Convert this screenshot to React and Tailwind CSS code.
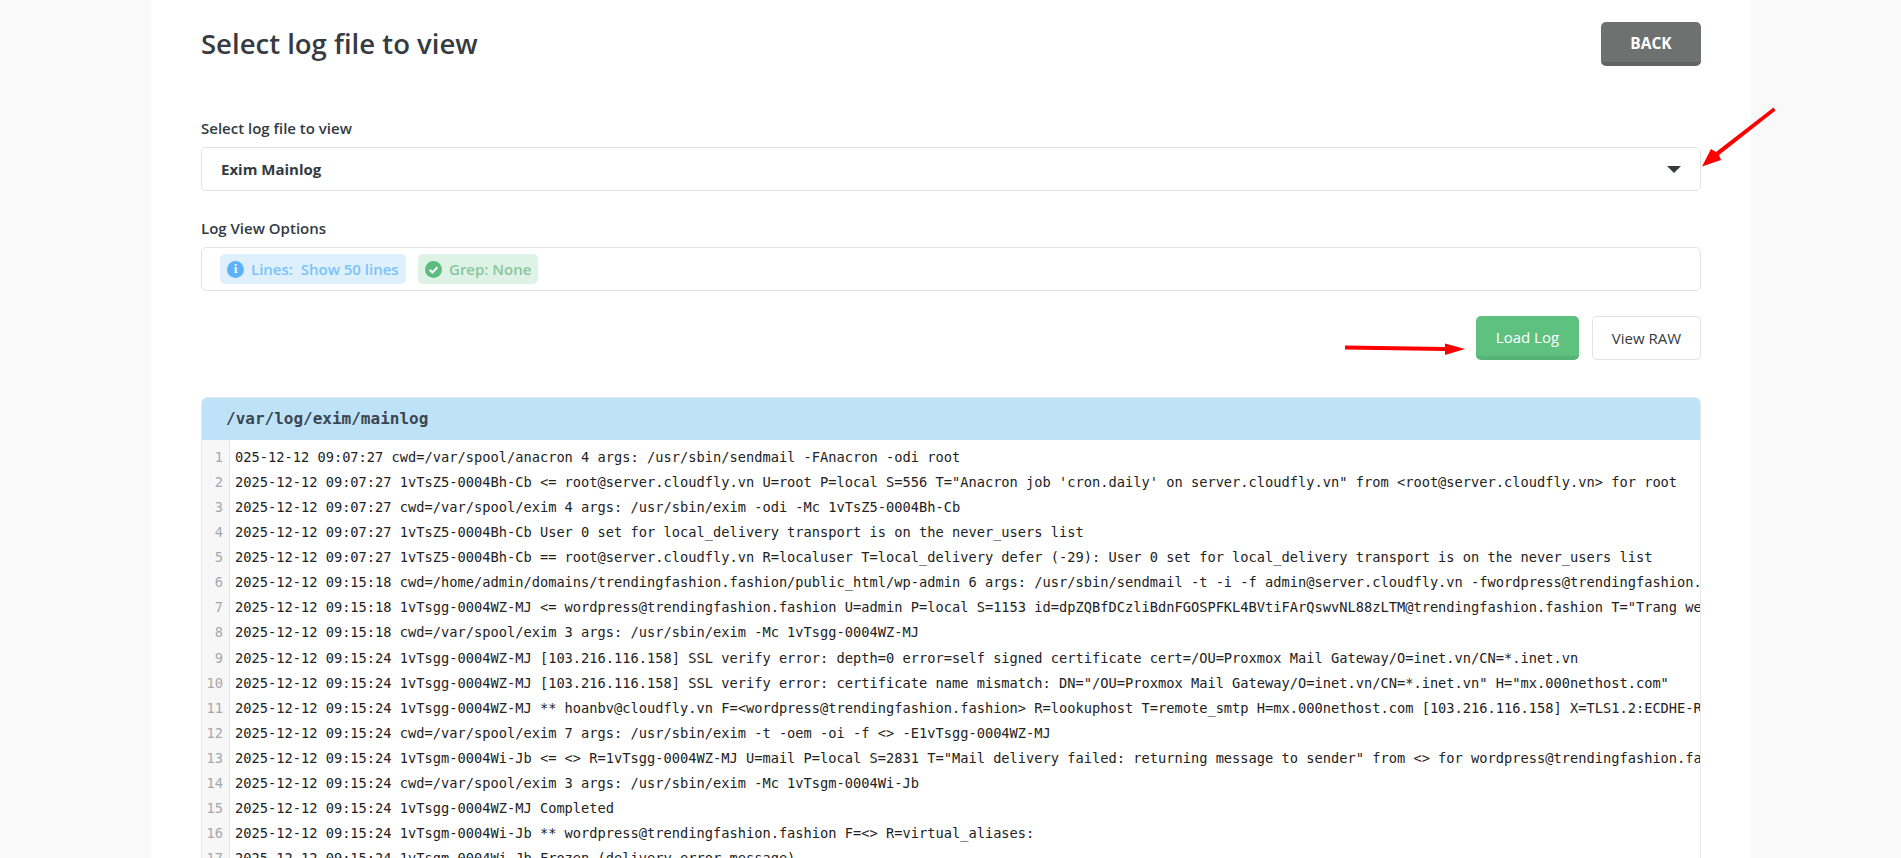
import React from 'react';

const logLines = [
    `025-12-12 09:07:27 cwd=/var/spool/anacron 4 args: /usr/sbin/sendmail -FAnacron -odi root`,
    `2025-12-12 09:07:27 1vTsZ5-0004Bh-Cb <= root@server.cloudfly.vn U=root P=local S=556 T="Anacron job 'cron.daily' on server.cloudfly.vn" from <root@server.cloudfly.vn> for root`,
    `2025-12-12 09:07:27 cwd=/var/spool/exim 4 args: /usr/sbin/exim -odi -Mc 1vTsZ5-0004Bh-Cb`,
    `2025-12-12 09:07:27 1vTsZ5-0004Bh-Cb User 0 set for local_delivery transport is on the never_users list`,
    `2025-12-12 09:07:27 1vTsZ5-0004Bh-Cb == root@server.cloudfly.vn R=localuser T=local_delivery defer (-29): User 0 set for local_delivery transport is on the never_users list`,
    `2025-12-12 09:15:18 cwd=/home/admin/domains/trendingfashion.fashion/public_html/wp-admin 6 args: /usr/sbin/sendmail -t -i -f admin@server.cloudfly.vn -fwordpress@trendingfashion.fashion`,
    `2025-12-12 09:15:18 1vTsgg-0004WZ-MJ <= wordpress@trendingfashion.fashion U=admin P=local S=1153 id=dpZQBfDCzliBdnFGOSPFKL4BVtiFArQswvNL88zLTM@trendingfashion.fashion T="Trang web`,
    `2025-12-12 09:15:18 cwd=/var/spool/exim 3 args: /usr/sbin/exim -Mc 1vTsgg-0004WZ-MJ`,
    `2025-12-12 09:15:24 1vTsgg-0004WZ-MJ [103.216.116.158] SSL verify error: depth=0 error=self signed certificate cert=/OU=Proxmox Mail Gateway/O=inet.vn/CN=*.inet.vn`,
    `2025-12-12 09:15:24 1vTsgg-0004WZ-MJ [103.216.116.158] SSL verify error: certificate name mismatch: DN="/OU=Proxmox Mail Gateway/O=inet.vn/CN=*.inet.vn" H="mx.000nethost.com"`,
    `2025-12-12 09:15:24 1vTsgg-0004WZ-MJ ** hoanbv@cloudfly.vn F=<wordpress@trendingfashion.fashion> R=lookuphost T=remote_smtp H=mx.000nethost.com [103.216.116.158] X=TLS1.2:ECDHE-RSA`,
    `2025-12-12 09:15:24 cwd=/var/spool/exim 7 args: /usr/sbin/exim -t -oem -oi -f <> -E1vTsgg-0004WZ-MJ`,
    `2025-12-12 09:15:24 1vTsgm-0004Wi-Jb <= <> R=1vTsgg-0004WZ-MJ U=mail P=local S=2831 T="Mail delivery failed: returning message to sender" from <> for wordpress@trendingfashion.fashion`,
    `2025-12-12 09:15:24 cwd=/var/spool/exim 3 args: /usr/sbin/exim -Mc 1vTsgm-0004Wi-Jb`,
    `2025-12-12 09:15:24 1vTsgg-0004WZ-MJ Completed`,
    `2025-12-12 09:15:24 1vTsgm-0004Wi-Jb ** wordpress@trendingfashion.fashion F=<> R=virtual_aliases:`,
    `2025-12-12 09:15:24 1vTsgm-0004Wi-Jb Frozen (delivery error message)`,
];

const Arrows = () => (
    <svg className="absolute left-0 top-0 pointer-events-none" width="1901" height="858" fill="#ff0000">
        <path d="M1773.5 107.5 L1775.5 110.5 L1719 155 L1721 160 L1702 166.5 L1711 149 L1716 152 Z" />
        <path d="M1345 345.5 L1445 347 L1445 343.5 L1465 349 L1445 355 L1445 351 L1345 349.5 Z" />
    </svg>
);

const App = () => {
    return (
        <div className="relative h-[858px] overflow-hidden bg-[#f9f9f9] font-['Open_Sans',sans-serif] text-[#333a42]">
            <div className="ml-[151px] mr-[150px] h-full bg-white px-[50px]">
                {/* Header */}
                <div className="flex items-start justify-between pt-[22px]">
                    <h1 className="text-[27.5px] font-semibold leading-[44px] text-[#363b42]">Select log file to view</h1>
                    <button className="h-[44px] w-[100px] rounded-[5px] border-b-[4px] border-[#626463] bg-[#6f7170] pt-[3px] text-[15.5px] font-bold text-white">
                        BACK
                    </button>
                </div>

                {/* Log file select */}
                <label className="mt-[50px] block text-[15px] font-semibold leading-[24px]">Select log file to view</label>
                <div className="mt-[7px] flex h-[44px] items-center justify-between rounded-[5px] border border-[#e2e3e4] pl-[19px] pr-[19px]">
                    <span className="text-[15px] font-bold">Exim Mainlog</span>
                    <span className="h-0 w-0 border-x-[7px] border-t-[7px] border-x-transparent border-t-[#363b42]" />
                </div>

                {/* Options */}
                <label className="mt-[25px] block text-[15px] font-semibold leading-[24px]">Log View Options</label>
                <div className="mt-[7px] flex h-[44px] items-center gap-[12px] rounded-[5px] border border-[#e2e3e4] pl-[18px]">
                    <span className="flex h-[30px] w-[186px] items-center gap-[7px] rounded-[5px] bg-[#dff0fd] pl-[7px] text-[15px] font-semibold text-[#79c3f9]">
                        <span className="flex h-[17px] w-[17px] items-center justify-center rounded-full bg-[#5cb2f8] font-['Liberation_Serif',serif] text-[13px] font-bold text-white">i</span>
                        <span className="whitespace-pre">Lines:  Show 50 lines</span>
                    </span>
                    <span className="flex h-[30px] w-[120px] items-center gap-[7px] rounded-[5px] bg-[#dff2e6] pl-[7px] text-[15px] font-semibold text-[#88c79d]">
                        <svg width="17" height="17" viewBox="0 0 17 17">
                            <circle cx="8.5" cy="8.5" r="8.5" fill="#5cbd7e" />
                            <path d="M4.6 8.8l2.8 2.7 5-5.2" fill="none" stroke="#fff" strokeWidth="2" />
                        </svg>
                        <span>Grep: None</span>
                    </span>
                </div>

                {/* Actions */}
                <div className="mt-[25px] flex justify-end gap-[13px]">
                    <button className="h-[44px] w-[103px] rounded-[5px] border-b-[4px] border-[#56b377] bg-[#5fc180] pt-[3px] text-[15px] text-white">
                        Load Log
                    </button>
                    <button className="h-[44px] w-[109px] rounded-[5px] border border-[#e2e3e4] bg-white text-[15px]">
                        View RAW
                    </button>
                </div>

                {/* Log output */}
                <div className="mt-[37px] overflow-hidden rounded-t-[6px] border-x border-t border-[#e6e8ea]">
                    <div className="flex h-[42px] items-center bg-[#bee3f8] pl-[24px] font-['DejaVu_Sans_Mono',monospace] text-[16px] font-bold text-[#3c4650]">
                        /var/log/exim/mainlog
                    </div>
                    <div className="flex">
                        <div className="w-[28px] shrink-0 border-r border-[#e4e6e8] bg-[#f7f7f7] pt-[5px] pr-[6px] text-right font-['DejaVu_Sans_Mono',monospace] text-[13.7px] leading-[25.06px] text-[#a3a8ad]">
                            {logLines.map((_, i) => (
                                <div key={i}>{i + 1}</div>
                            ))}
                        </div>
                        <div className="min-w-0 flex-1 overflow-hidden pt-[5px] pl-[5px] font-['DejaVu_Sans_Mono',monospace] text-[13.7px] leading-[25.06px] whitespace-pre text-[#222]">
                            {logLines.map((line, i) => (
                                <div key={i}>{line}</div>
                            ))}
                        </div>
                    </div>
                </div>
            </div>
            <Arrows />
        </div>
    );
};

export default App;
